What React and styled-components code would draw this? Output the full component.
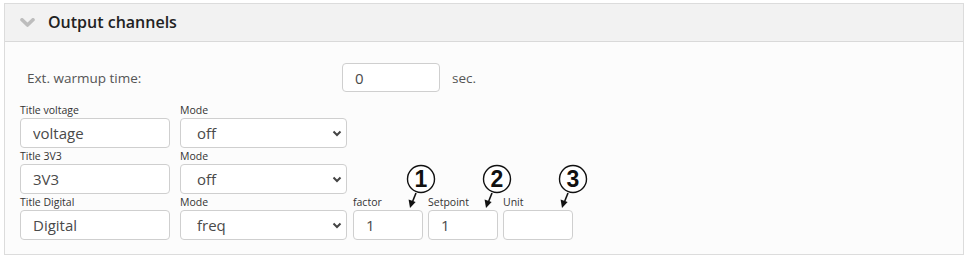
import React from "react";
import styled, { createGlobalStyle } from "styled-components";

const Global = createGlobalStyle`
  html, body { margin: 0; padding: 0; background: #ffffff; }
  body { font-family: "Open Sans", "Noto Sans", sans-serif; color: #333; }
  * { box-sizing: border-box; }
`;

const Panel = styled.section`
  margin: 3px 0 0 4px;
  width: 960px;
  height: 252px;
  border: 1px solid #dcdcdc;
  background: #fcfcfc;
  display: flex;
  flex-direction: column;
`;

const Header = styled.header`
  height: 38px;
  background: #f2f2f2;
  border-bottom: 1px solid #d9d9d9;
  display: flex;
  align-items: center;
  padding-left: 15px;
  gap: 13px;
`;

const HeaderTitle = styled.h2`
  margin: 0;
  font-size: 16px;
  font-weight: 600;
  color: #222;
  line-height: 1;
  padding-bottom: 2px;
`;

const Body = styled.div`
  padding: 21px 0 0 15px;
  display: flex;
  flex-direction: column;
`;

const WarmupRow = styled.div`
  display: flex;
  align-items: center;
  height: 29px;
  margin-bottom: 10px;
`;

const WarmupLabel = styled.span`
  width: 322px;
  padding-left: 7px;
  font-size: 13.5px;
  color: #555;
`;

const Unit = styled.span`
  margin-left: 12px;
  font-size: 13.5px;
  color: #555;
`;

const FieldRow = styled.div`
  display: flex;
  align-items: flex-start;
  gap: ${(p) => p.$gap || 10}px;
`;

const Group = styled.div`
  display: flex;
  gap: 5px;
  margin-left: -4px;
`;

const Field = styled.div`
  position: relative;
  display: flex;
  flex-direction: column;
  width: ${(p) => p.$w}px;
`;

const Label = styled.label`
  height: 16px;
  line-height: 16px;
  font-size: 10.5px;
  color: #333;
  white-space: nowrap;
`;

const TextInput = styled.input`
  width: ${(p) => p.$w || 0}px;
  height: ${(p) => p.$h || 30}px;
  border: 1px solid #cfcfcf;
  border-radius: 4px;
  background: #fff;
  padding: 0 0 0 12px;
  font-family: "Open Sans", "Noto Sans", sans-serif;
  font-size: 15px;
  color: #4a4a4a;
  outline: none;
`;

const SelectWrap = styled.div`
  position: relative;
  width: 167px;
  height: 30px;
`;

const Select = styled.select`
  appearance: none;
  -webkit-appearance: none;
  width: 100%;
  height: 100%;
  border: 1px solid #cfcfcf;
  border-radius: 4px;
  background: #fff;
  padding: 0 0 0 16px;
  font-family: "Open Sans", "Noto Sans", sans-serif;
  font-size: 15px;
  color: #4a4a4a;
  outline: none;
`;

const Caret = styled.svg`
  position: absolute;
  right: 5px;
  top: 12px;
  pointer-events: none;
`;

const Callout = styled.svg`
  position: absolute;
  left: ${(p) => p.$x}px;
  top: -29px;
  overflow: visible;
  pointer-events: none;
`;

const Chevron = () => (
  <svg width="15" height="9" viewBox="0 0 15 9">
    <path d="M2 1.8 L7.5 7 L13 1.8" fill="none" stroke="#bdbdbd" strokeWidth="3.6" strokeLinecap="round" strokeLinejoin="round" />
  </svg>
);

const Mark = ({ n, x }) => (
  <Callout $x={x} width="34" height="44" viewBox="0 0 34 44">
    <circle cx="17" cy="14" r="13.5" fill="#fff" stroke="#111" strokeWidth="1.4" />
    <text x="17" y="22" textAnchor="middle" fontFamily="Liberation Sans, Arial, sans-serif" fontWeight="700" fontSize="23" fill="#111">{n}</text>
    <line x1="12" y1="28" x2="8.4" y2="37" stroke="#111" strokeWidth="1.6" />
    <polygon points="6,43 4.6,34.6 11.6,37" fill="#111" />
  </Callout>
);

const ModeSelect = ({ value, options }) => (
  <SelectWrap>
    <Select defaultValue={value}>
      {options.map((o) => (
        <option key={o} value={o}>{o}</option>
      ))}
    </Select>
    <Caret width="10" height="7" viewBox="0 0 10 7">
      <path d="M1.5 1.5 L5 5 L8.5 1.5" fill="none" stroke="#444" strokeWidth="2" />
    </Caret>
  </SelectWrap>
);

const channels = [
  { title: "Title voltage", value: "voltage", mode: "off" },
  { title: "Title 3V3", value: "3V3", mode: "off" },
  { title: "Title Digital", value: "Digital", mode: "freq", extra: true },
];

const extras = [
  { label: "factor", value: "1", n: 1, x: 51 },
  { label: "Setpoint", value: "1", n: 2, x: 52 },
  { label: "Unit", value: "", n: 3, x: 53 },
];

export default function App() {
  return (
    <>
      <Global />
      <Panel>
        <Header>
          <Chevron />
          <HeaderTitle>Output channels</HeaderTitle>
        </Header>
        <Body>
          <WarmupRow>
            <WarmupLabel>Ext. warmup time:</WarmupLabel>
            <TextInput $w={98} $h={29} defaultValue="0" />
            <Unit>sec.</Unit>
          </WarmupRow>
          {channels.map((c) => (
            <FieldRow key={c.title} $gap={10}>
              <Field $w={150}>
                <Label>{c.title}</Label>
                <TextInput $w={150} defaultValue={c.value} />
              </Field>
              <Field $w={167}>
                <Label>Mode</Label>
                <ModeSelect value={c.mode} options={["off", "freq", "on"]} />
              </Field>
              {c.extra && (
                <Group>
                  {extras.map((e) => (
                    <Field key={e.label} $w={70}>
                      <Label>{e.label}</Label>
                      <TextInput $w={70} defaultValue={e.value} />
                      <Mark n={e.n} x={e.x} />
                    </Field>
                  ))}
                </Group>
              )}
            </FieldRow>
          ))}
        </Body>
      </Panel>
    </>
  );
}
